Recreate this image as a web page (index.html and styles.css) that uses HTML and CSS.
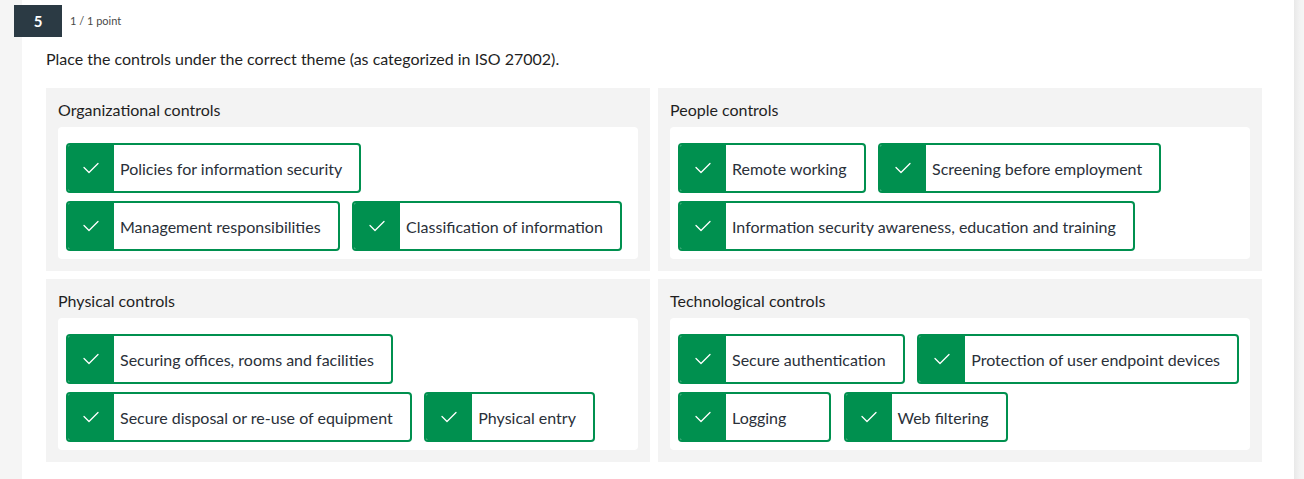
FILE: index.html
```html
<!DOCTYPE html>
<html lang="en">
<head>
<meta charset="utf-8">
<title>Question 5</title>
<link rel="stylesheet" href="styles.css">
</head>
<body>
<div class="page">
  <div class="gutter-left"></div>
  <main class="content">
    <div class="qhead">
      <div class="qnum">5</div>
      <div class="qscore">1 / 1 point</div>
    </div>
    <p class="prompt">Place the controls under the correct theme (as categorized in ISO 27002).</p>
    <div class="grid">
      <section class="panel">
        <h3 class="panel-title">Organizational controls</h3>
        <div class="drop">
          <div class="chip"><span class="tick"><svg viewBox="0 0 16 12" width="16" height="12"><path d="M1 5.5 L6 10.5 L15 1.5"/></svg></span><span class="label">Policies for information security</span></div>
          <div class="chip"><span class="tick"><svg viewBox="0 0 16 12" width="16" height="12"><path d="M1 5.5 L6 10.5 L15 1.5"/></svg></span><span class="label">Management responsibilities</span></div>
          <div class="chip"><span class="tick"><svg viewBox="0 0 16 12" width="16" height="12"><path d="M1 5.5 L6 10.5 L15 1.5"/></svg></span><span class="label">Classification of information</span></div>
        </div>
      </section>
      <section class="panel">
        <h3 class="panel-title">People controls</h3>
        <div class="drop">
          <div class="chip"><span class="tick"><svg viewBox="0 0 16 12" width="16" height="12"><path d="M1 5.5 L6 10.5 L15 1.5"/></svg></span><span class="label">Remote working</span></div>
          <div class="chip"><span class="tick"><svg viewBox="0 0 16 12" width="16" height="12"><path d="M1 5.5 L6 10.5 L15 1.5"/></svg></span><span class="label">Screening before employment</span></div>
          <div class="chip"><span class="tick"><svg viewBox="0 0 16 12" width="16" height="12"><path d="M1 5.5 L6 10.5 L15 1.5"/></svg></span><span class="label">Information security awareness, education and training</span></div>
        </div>
      </section>
      <section class="panel">
        <h3 class="panel-title">Physical controls</h3>
        <div class="drop">
          <div class="chip"><span class="tick"><svg viewBox="0 0 16 12" width="16" height="12"><path d="M1 5.5 L6 10.5 L15 1.5"/></svg></span><span class="label">Securing offices, rooms and facilities</span></div>
          <div class="chip"><span class="tick"><svg viewBox="0 0 16 12" width="16" height="12"><path d="M1 5.5 L6 10.5 L15 1.5"/></svg></span><span class="label">Secure disposal or re-use of equipment</span></div>
          <div class="chip"><span class="tick"><svg viewBox="0 0 16 12" width="16" height="12"><path d="M1 5.5 L6 10.5 L15 1.5"/></svg></span><span class="label">Physical entry</span></div>
        </div>
      </section>
      <section class="panel">
        <h3 class="panel-title">Technological controls</h3>
        <div class="drop">
          <div class="chip"><span class="tick"><svg viewBox="0 0 16 12" width="16" height="12"><path d="M1 5.5 L6 10.5 L15 1.5"/></svg></span><span class="label">Secure authentication</span></div>
          <div class="chip"><span class="tick"><svg viewBox="0 0 16 12" width="16" height="12"><path d="M1 5.5 L6 10.5 L15 1.5"/></svg></span><span class="label">Protection of user endpoint devices</span></div>
          <div class="chip"><span class="tick"><svg viewBox="0 0 16 12" width="16" height="12"><path d="M1 5.5 L6 10.5 L15 1.5"/></svg></span><span class="label">Logging</span></div>
          <div class="chip"><span class="tick"><svg viewBox="0 0 16 12" width="16" height="12"><path d="M1 5.5 L6 10.5 L15 1.5"/></svg></span><span class="label">Web filtering</span></div>
        </div>
      </section>
    </div>
  </main>
  <div class="gutter-right"></div>
</div>
</body>
</html>
```
FILE: styles.css
```css
* { box-sizing: border-box; }
html, body { margin: 0; padding: 0; }
body {
  background: #f5f5f5;
  font-family: Lato, "Open Sans", Arial, sans-serif;
  color: #1f1f1f;
}
.page {
  display: flex;
  width: 1304px;
  height: 479px;
  overflow: hidden;
}
.gutter-left {
  width: 22px;
  flex: none;
  background: #f5f5f5;
}
.gutter-right {
  width: 10px;
  flex: none;
  background: linear-gradient(to right, #e9e9e9, #f3f3f3 60%, #f5f5f5);
}
.content {
  width: 1272px;
  flex: none;
  background: #fff;
  padding: 5px 32px 0 24px;
}
.qhead {
  display: flex;
  align-items: center;
  margin-left: -32px;
  height: 32px;
}
.qnum {
  width: 48px;
  height: 32px;
  background: #2b3a44;
  color: #fff;
  font-size: 15px;
  font-weight: 700;
  display: flex;
  align-items: center;
  justify-content: center;
}
.qscore {
  margin-left: 8px;
  font-size: 11px;
  color: #4a4a4a;
  margin-top: -2px;
}
.prompt {
  margin: 12px 0 0 0;
  font-size: 16px;
  line-height: 20px;
  color: #1f1f1f;
}
.grid {
  margin-top: 19px;
  display: grid;
  grid-template-columns: 604px 604px;
  gap: 8px;
}
.panel {
  background: #f3f3f3;
  padding: 12px 12px 12px 12px;
}
.panel-title {
  margin: 0 0 7px 0;
  font-size: 16px;
  font-weight: 400;
  line-height: 20px;
  color: #1f1f1f;
}
.drop {
  background: #fff;
  border-radius: 4px;
  padding: 16px 8px 8px 8px;
  display: flex;
  flex-wrap: wrap;
  gap: 8px 12.5px;
}
.chip {
  display: flex;
  align-items: stretch;
  height: 50px;
  min-width: 153px;
  border: 2px solid #00904f;
  border-radius: 4px;
  background: #fff;
  overflow: hidden;
}
.tick {
  width: 46px;
  flex: none;
  background: #00904f;
  display: flex;
  align-items: center;
  justify-content: center;
}
.tick svg {
  fill: none;
  stroke: #fff;
  stroke-width: 1.3;
  stroke-linecap: round;
  stroke-linejoin: round;
}
.label {
  display: flex;
  align-items: center;
  padding: 0 17px 0 6px;
  font-size: 16px;
  color: #2a3039;
  white-space: nowrap;
}
```
